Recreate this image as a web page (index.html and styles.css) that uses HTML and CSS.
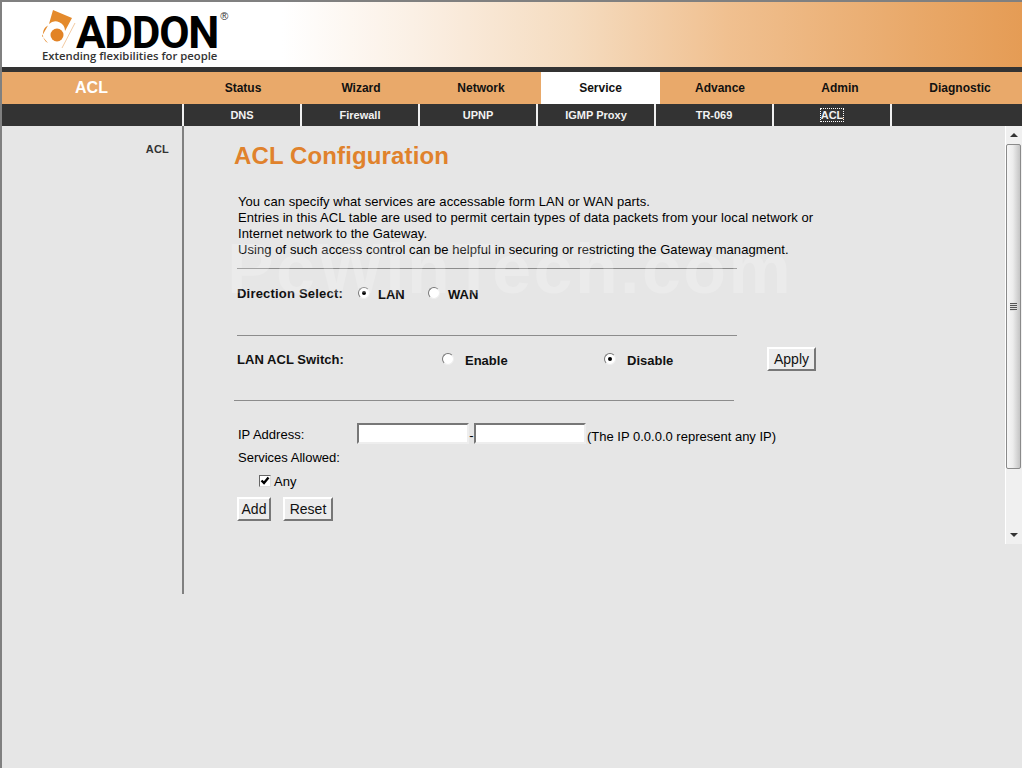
FILE: index.html
```html
<!DOCTYPE html>
<html lang="en">
<head>
<meta charset="utf-8">
<title>ACL Configuration</title>
<link rel="stylesheet" href="styles.css">
</head>
<body>
<div class="page">
  <header class="banner">
    <div class="logo">
      <div class="logo-top">
        <svg class="logo-mark" width="34" height="38" viewBox="0 0 34 38">
          <path d="M11 0 L30 8 L23 21 A9.5 9.5 0 0 0 7 14 Z" fill="#e48a2c"/>
          <path d="M6 15.5 L0 26 L6 33 A10 10 0 0 1 6 15.5 Z" fill="#e48a2c"/>
          <circle cx="15" cy="25" r="6.5" fill="#e28326"/>
          <path d="M33 13 L20 38" stroke="#f2c9a0" stroke-width="1" fill="none"/>
        </svg>
        <span class="logo-name">ADDON</span>
        <span class="logo-reg">®</span>
      </div>
      <div class="logo-tag">Extending flexibilities for people</div>
    </div>
  </header>
  <div class="darkbar"></div>
  <nav class="mainnav">
    <div class="nav-title">ACL</div>
    <div class="nav-item first">Status</div>
    <div class="nav-item">Wizard</div>
    <div class="nav-item">Network</div>
    <div class="nav-item active">Service</div>
    <div class="nav-item">Advance</div>
    <div class="nav-item">Admin</div>
    <div class="nav-item">Diagnostic</div>
  </nav>
  <nav class="subnav">
    <div class="sub-item"><span>DNS</span></div>
    <div class="sub-item"><span>Firewall</span></div>
    <div class="sub-item"><span>UPNP</span></div>
    <div class="sub-item"><span>IGMP Proxy</span></div>
    <div class="sub-item"><span>TR-069</span></div>
    <div class="sub-item"><span class="focused">ACL</span></div>
    <div class="sub-item"></div>
  </nav>
  <div class="body">
    <aside class="side"><div class="side-link">ACL</div></aside>
    <section class="frame">
      <main class="content">
        <div class="watermark">PcWinTech.com</div>
        <h1 class="title">ACL Configuration</h1>
        <p class="intro">You can specify what services are accessable form LAN or WAN parts.<br>Entries in this ACL table are used to permit certain types of data packets from your local network or<br>Internet network to the Gateway.<br>Using of such access control can be helpful in securing or restricting the Gateway managment.</p>
        <div class="rule rule-a"></div>
        <div class="row dir-row">
          <span class="strong dir-label">Direction Select:</span>
          <span class="radio on"></span><span class="strong low lan-label">LAN</span>
          <span class="radio"></span><span class="strong low wan-label">WAN</span>
        </div>
        <div class="rule rule-b"></div>
        <div class="row switch-row">
          <span class="strong switch-label">LAN ACL Switch:</span>
          <span class="radio"></span><span class="strong low enable-label">Enable</span>
          <span class="radio on"></span><span class="strong low disable-label">Disable</span>
          <button class="btn apply">Apply</button>
        </div>
        <div class="rule rule-c"></div>
        <div class="row ip-row">
          <span class="ip-label">IP Address:</span>
          <span class="field"></span><span class="dash">-</span><span class="field"></span>
          <span class="ip-note">(The IP 0.0.0.0 represent any IP)</span>
        </div>
        <div class="services">Services Allowed:</div>
        <div class="row any-row">
          <span class="check"><svg width="10" height="10" viewBox="0 0 10 10"><path d="M1.5 4.5 L4 7 L8.5 1.5" fill="none" stroke="#000" stroke-width="2.4"/></svg></span>
          <span>Any</span>
        </div>
        <div class="row action-row">
          <button class="btn add">Add</button>
          <button class="btn reset">Reset</button>
        </div>
      </main>
      <div class="scrollbar">
        <div class="sb-arrow"><span class="tri-up"></span></div>
        <div class="sb-thumb"><span class="grip"></span></div>
        <div class="sb-track"></div>
        <div class="sb-arrow"><span class="tri-down"></span></div>
      </div>
    </section>
  </div>
</div>
</body>
</html>
```
FILE: styles.css
```css
* { box-sizing: border-box; }
html, body { margin: 0; padding: 0; height: 100%; }
body { background: #e6e6e6; font-family: "Liberation Sans", Arial, sans-serif; font-size: 13px; color: #000; overflow: hidden; }
.page { height: 768px; border-left: 2px solid #808080; border-top: 2px solid #808080; display: flex; flex-direction: column; }
.banner { height: 65px; flex: none; padding: 6px 0 0 40px; background: linear-gradient(90deg, #fff 0, #fff 280px, #fbf0e5 410px, #f5dcc0 570px, #f0c090 725px, #e9a96a 910px, #e59c55 1020px); }
.logo-top { display: flex; align-items: flex-start; height: 42px; }
.logo-mark { margin-top: 2px; flex: none; }
.logo-name { font-family: Roboto, "Liberation Sans", sans-serif; font-weight: 700; font-size: 44px; line-height: 48px; letter-spacing: -1.2px; margin-top: 1px; color: #000; }
.logo-reg { font-size: 11px; color: #333; margin: 2px 0 0 2px; }
.logo-tag { font-family: "Open Sans", sans-serif; font-weight: 600; font-size: 11.3px; line-height: 12px; color: #333; }
.darkbar { height: 5px; flex: none; background: #333; }
.mainnav { height: 32px; flex: none; display: grid; grid-template-columns: 179px 120px 120px 120px 119px 120px 120px 120px; background: #e9a96a; font-weight: 700; align-items: stretch; }
.nav-title { display: flex; align-items: center; justify-content: center; color: #fff; font-size: 16px; }
.nav-item { display: flex; align-items: center; justify-content: center; color: #111; font-size: 12px; }
.nav-item.first { padding-left: 4px; }
.nav-item.active { background: #fff; }
.subnav { height: 22px; flex: none; display: grid; background: #333; padding-left: 180px; grid-template-columns: repeat(6, 118px) 1fr; }
.sub-item { border-left: 2px solid #f0f0f0; display: flex; align-items: center; justify-content: center; color: #f2f2f2; font-size: 11px; font-weight: 700; }
.focused { outline: 1px dotted #fff; line-height: 12px; }
.body { flex: 1; display: flex; align-items: flex-start; }
.side { width: 182px; height: 468px; flex: none; border-right: 2px solid #808080; padding: 17px 13px 0 0; text-align: right; }
.side-link { font-size: 11px; font-weight: 700; color: #333; line-height: 13px; letter-spacing: .2px; }
.frame { flex: 1; height: 418px; display: flex; }
.content { flex: 1; position: relative; overflow: hidden; padding-left: 50px; }
.watermark { position: absolute; left: 43px; top: 108px; font-size: 70px; font-weight: 700; line-height: 70px; color: #fff; opacity: .2; white-space: nowrap; letter-spacing: 2.4px; }
.title { margin: 16px 0 0; font-size: 24px; line-height: 28px; font-weight: 700; color: #e0822c; letter-spacing: .13px; }
.intro { margin: 24px 0 0 4px; width: 600px; font-size: 13px; line-height: 16px; letter-spacing: .07px; }
.rule { height: 1px; width: 500px; background: #8c8c8c; }
.rule-a { margin: 10px 0 0 3px; }
.rule-b { margin: 0 0 0 3px; }
.rule-c { margin: 0; }
.row { display: flex; align-items: center; }
.strong { font-weight: 700; font-size: 13px; color: #111; }
.low { margin-top: 2px; }
.dir-row { height: 66px; padding: 0 0 18px 3px; }
.dir-label { width: 121px; letter-spacing: .2px; }
.lan-label { margin-left: 8px; width: 50px; }
.wan-label { margin-left: 8px; }
.switch-row { height: 64px; padding: 0 0 18px 3px; }
.switch-label { width: 205px; letter-spacing: .05px; }
.enable-label { margin-left: 11px; width: 139px; }
.disable-label { margin-left: 11px; width: 140px; }
.radio { width: 12px; height: 12px; flex: none; border-radius: 50%; background: #fff; border: 1px solid; border-color: #777 #eee #eee #777; display: flex; align-items: center; justify-content: center; }
.radio.on::after { content: ""; width: 4px; height: 4px; border-radius: 50%; background: #000; }
.btn { font-family: "Liberation Sans", Arial, sans-serif; font-size: 14px; padding: 0; background: #ececec; color: #111; border: 2px solid; border-color: #fff #777 #777 #fff; }
.apply { width: 49px; height: 24px; }
.ip-row { height: 21px; margin-top: 22px; padding-left: 4px; }
.ip-label { width: 119px; margin-top: 1px; }
.field { width: 112px; height: 21px; background: #fff; border: 2px solid; border-color: #777 #eee #eee #777; }
.dash { width: 5px; text-align: center; margin-top: 3px; }
.ip-note { margin: 5px 0 0 1px; }
.services { margin: 4px 0 0 4px; line-height: 20px; }
.any-row { margin: 3px 0 0 25px; height: 20px; }
.check { width: 12px; height: 12px; margin-right: 3px; background: #fff; border: 1px solid; border-color: #666 #ddd #ddd #666; display: flex; align-items: center; justify-content: center; }
.action-row { margin: 6px 0 0 3px; }
.add { width: 34px; height: 24px; }
.reset { width: 50px; height: 24px; margin-left: 12px; }
.scrollbar { width: 17px; flex: none; display: flex; flex-direction: column; background: #f0f0f0; border-left: 1px solid #fff; padding-right: 1px; }
.sb-arrow { height: 18px; flex: none; display: flex; align-items: center; justify-content: center; }
.tri-up { border: 4px solid transparent; border-top: 0; border-bottom-color: #333; }
.tri-down { border: 4px solid transparent; border-bottom: 0; border-top-color: #333; }
.sb-thumb { height: 325px; flex: none; border: 1px solid #8a8a8a; border-radius: 2px; background: linear-gradient(90deg, #f6f6f6 0%, #ececec 45%, #c4c4c4 100%); display: flex; align-items: center; justify-content: center; padding-top: 1px; }
.grip { width: 7px; height: 8px; background: repeating-linear-gradient(180deg, #555 0, #555 1px, #ddd 1px, #ddd 2px); }
.sb-track { flex: 1; }
```
